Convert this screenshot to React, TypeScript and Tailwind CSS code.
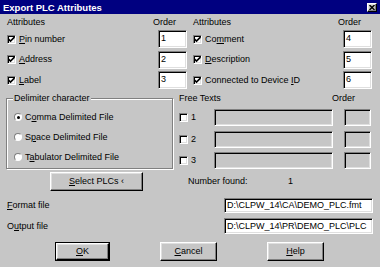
import type { ReactNode } from "react";

const sunken =
  "border border-t-[#808080] border-l-[#808080] border-r-white border-b-white shadow-[inset_1px_1px_0_#000,inset_-1px_-1px_0_#dfdfdf]";
const raised =
  "border border-t-white border-l-white border-r-black border-b-black shadow-[inset_-1px_-1px_0_#808080,inset_1px_1px_0_#dfdfdf]";

function U({ children }: { children: ReactNode }) {
  return <span className="underline decoration-1 underline-offset-[1px]">{children}</span>;
}

function Check({ checked }: { checked?: boolean }) {
  return (
    <span className={`flex h-[9px] w-[9px] shrink-0 items-center justify-center bg-white ${sunken}`}>
      {checked && (
        <svg width="7" height="7" viewBox="0 0 7 7">
          <path d="M0.5 3 L2.5 5 L6.5 1" fill="none" stroke="#000" strokeWidth="1.6" />
        </svg>
      )}
    </span>
  );
}

function Radio({ checked }: { checked?: boolean }) {
  return (
    <span className="flex h-[8px] w-[8px] shrink-0 items-center justify-center rounded-full border border-t-[#808080] border-l-[#808080] border-r-white border-b-white bg-white">
      {checked && <span className="h-[3px] w-[3px] rounded-full bg-black" />}
    </span>
  );
}

function Edit({ value, className }: { value?: string; className: string }) {
  return (
    <div className={`overflow-hidden whitespace-nowrap bg-white pl-[2px] leading-[13px] ${sunken} ${className}`}>
      {value}
    </div>
  );
}

function AttrRow({ label, order }: { label: ReactNode; order: string }) {
  return (
    <div className="flex h-[18px] items-center">
      <Check checked />
      <span className="ml-[3px] flex-1">{label}</span>
      <Edit value={order} className="h-[18px] w-[29px] pt-[1px]" />
    </div>
  );
}

function FreeRow({ n }: { n: string }) {
  return (
    <div className="flex h-[17px] items-center">
      <Check />
      <span className="ml-[3px] w-[23px]">{n}</span>
      <div className={`h-[17px] w-[119px] bg-[#c6c6c6] ${sunken}`} />
      <div className={`ml-[11px] h-[17px] w-[27px] bg-[#c6c6c6] ${sunken}`} />
    </div>
  );
}

function Btn({ children, className }: { children: ReactNode; className: string }) {
  return (
    <div className={`flex items-center justify-center bg-[#c6c6c6] ${raised} ${className}`}>{children}</div>
  );
}

export default function App() {
  return (
    <div className="h-[267px] w-[380px] overflow-hidden bg-[#c6c6c6] font-['Liberation_Sans',Arial,sans-serif] text-[9px] leading-[11px] text-black">
      {/* title bar */}
      <div className="flex h-[14px] items-center justify-between bg-[#000080] pl-[3px] pr-[3px]">
        <span className="text-[9.5px] font-bold text-white">Export PLC Attributes</span>
        <div className={`flex h-[9px] w-[10px] items-center justify-center bg-[#c6c6c6] ${raised}`}>
          <svg width="6" height="5" viewBox="0 0 6 5">
            <path d="M0.5 0 L5.5 5 M5.5 0 L0.5 5" stroke="#000" strokeWidth="1.4" />
          </svg>
        </div>
      </div>

      {/* attributes */}
      <div className="mt-[2px] flex">
        <div className="w-[187px] pl-[7px]">
          <div className="flex h-[12px] items-center">
            <span className="w-[146px]">Attributes</span>
            <span>Order</span>
          </div>
          <div className="mt-[2px] flex flex-col gap-[2.5px]">
            <AttrRow label={<><U>P</U>in number</>} order="1" />
            <AttrRow label={<><U>A</U>ddress</>} order="2" />
            <AttrRow label={<><U>L</U>abel</>} order="3" />
          </div>
        </div>
        <div className="w-[185px] pl-[6px]">
          <div className="flex h-[12px] items-center">
            <span className="w-[145px]">Attributes</span>
            <span>Order</span>
          </div>
          <div className="mt-[2px] flex flex-col gap-[2.5px]">
            <AttrRow label={<>Co<U>m</U>ment</>} order="4" />
            <AttrRow label={<><U>D</U>escription</>} order="5" />
            <AttrRow label={<>Connected to Device <U>I</U>D</>} order="6" />
          </div>
        </div>
      </div>

      {/* delimiter + free texts */}
      <div className="mt-[4px] flex items-start">
        <div className="ml-[6px] mt-[5px] w-[167px] border border-[#808080] pb-[1px] shadow-[inset_1px_1px_0_#fff,1px_1px_0_#fff]">
          <span className="-mt-[6px] ml-[6px] block w-fit bg-[#c6c6c6] px-[1px]">Delimiter character</span>
          <div className="mt-[3px] flex flex-col pl-[7px]">
            <div className="flex h-[20px] items-center gap-[3px]">
              <Radio checked />
              <span>
                C<U>o</U>mma Delimited File
              </span>
            </div>
            <div className="flex h-[20px] items-center gap-[3px]">
              <Radio />
              <span>
                S<U>p</U>ace Delimited File
              </span>
            </div>
            <div className="flex h-[20px] items-center gap-[3px]">
              <Radio />
              <span>
                T<U>a</U>bulator Delimited File
              </span>
            </div>
          </div>
        </div>
        <div className="ml-[5px] w-[195px] pl-[1px]">
          <div className="flex h-[11px] items-center">
            <span className="w-[153px]">Free Texts</span>
            <span>Order</span>
          </div>
          <div className="mt-[5px] flex flex-col gap-[4.5px]">
            <FreeRow n="1" />
            <FreeRow n="2" />
            <FreeRow n="3" />
          </div>
        </div>
      </div>

      {/* select plcs */}
      <div className="mt-[3px] flex items-center">
        <Btn className="ml-[50px] h-[19px] w-[93px]">
          <span>
            <U>S</U>elect PLCs &lsaquo;
          </span>
        </Btn>
        <span className="ml-[45px] w-[100px]">Number found:</span>
        <span>1</span>
      </div>

      {/* files */}
      <div className="mt-[7px] flex h-[15px] items-center">
        <span className="w-[224px] pl-[7px]">
          <U>F</U>ormat file
        </span>
        <Edit value="D:\CLPW_14\CA\DEMO_PLC.fmt" className="h-[15px] w-[149px]" />
      </div>
      <div className="mt-[5px] flex h-[16px] items-center">
        <span className="w-[224px] pl-[7px]">
          O<U>u</U>tput file
        </span>
        <Edit value="D:\CLPW_14\PR\DEMO_PLC\PLC" className="h-[16px] w-[149px] pt-[1px]" />
      </div>

      {/* buttons */}
      <div className="mt-[8px] flex">
        <div className="ml-[55px] h-[19px] w-[55px] border border-black">
          <Btn className="h-full w-full">
            <span>
              <U>O</U>K
            </span>
          </Btn>
        </div>
        <Btn className="ml-[50px] h-[19px] w-[57px]">
          <span>
            <U>C</U>ancel
          </span>
        </Btn>
        <Btn className="ml-[50px] h-[19px] w-[57px]">
          <span>
            <U>H</U>elp
          </span>
        </Btn>
      </div>
    </div>
  );
}
